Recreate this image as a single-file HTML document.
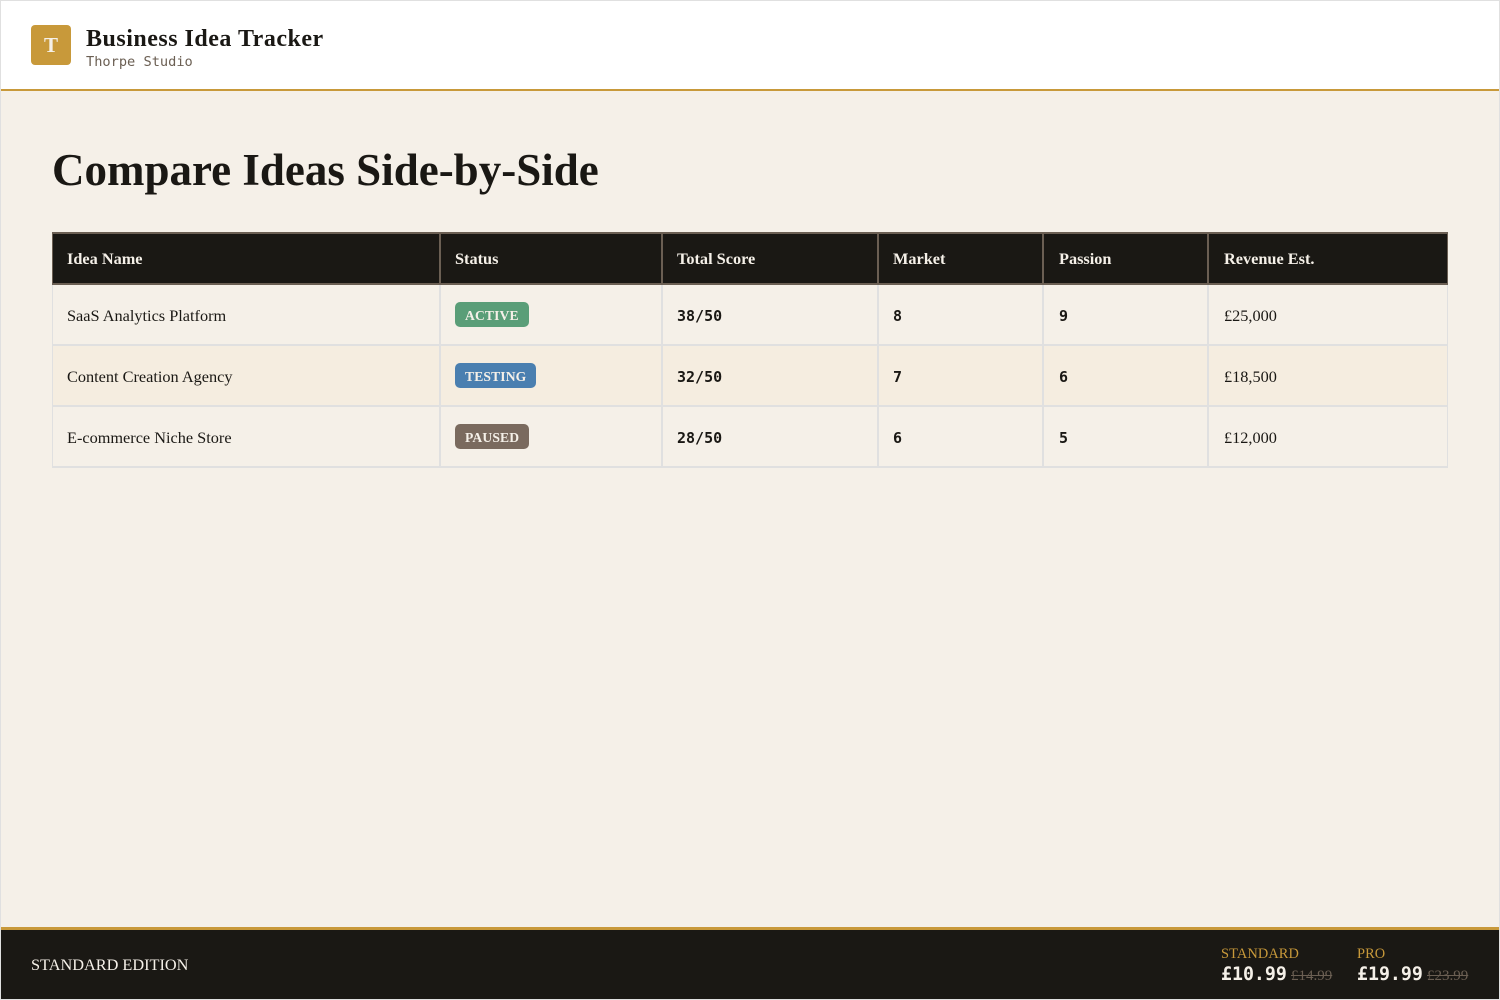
<!DOCTYPE html>
<html>
<head>
<meta charset="utf-8">
<style>
*{box-sizing:border-box}
html,body{margin:0;padding:0;width:1500px;height:1000px;overflow:hidden;background:#f5f0e8}
body{position:relative;font-family:"Liberation Serif",serif;color:#1a1814}
.frame{position:absolute;left:0;top:0;width:1500px;height:1000px;border:1px solid #e0e0e0;pointer-events:none;z-index:5}
header{position:absolute;left:0;top:0;width:1500px;height:91px;background:#fff;border-bottom:2px solid #c8993a}
.logo{position:absolute;left:31px;top:25px;width:40px;height:40px;background:#c8993a;border-radius:4px;color:#f5f0e8;font-weight:700;font-size:21px;line-height:40px;text-align:center}
.t1{position:absolute;left:86px;top:24px;font-size:24px;font-weight:700;line-height:30px;white-space:nowrap;letter-spacing:.5px}
.t2{position:absolute;left:86px;top:54px;font-family:"DejaVu Sans Mono",monospace;font-size:13.65px;line-height:17px;color:#6b5f53;white-space:nowrap}
h1{position:absolute;left:52px;top:144px;margin:0;font-size:45px;line-height:52px;font-weight:700;white-space:nowrap}
table{position:absolute;left:51px;top:232px;width:1396px;border-collapse:collapse;table-layout:fixed}
th{background:#1a1814;color:#f5f0e8;font-size:16.3px;font-weight:700;text-align:left;padding:1px 14px 0;height:51px;border:2px solid #6b5f53}
td{height:61px;padding:3px 14px 0;font-size:16.3px;border:2px solid #e0e0e0;vertical-align:middle}
th:nth-child(n+5),td:nth-child(n+5){padding-left:15px}
tr.alt td{background:#f5ede0}
.m{font-family:"DejaVu Sans Mono",monospace;font-weight:700;font-size:15px;padding-top:2px}
.b{display:inline-block;height:25px;line-height:28px;padding:0 10px;border-radius:5px;color:#f5f0e8;font-weight:700;font-size:13.6px;letter-spacing:.13px;vertical-align:middle;position:relative;top:-2px}
.strip{position:absolute;top:232px;width:1px;height:237px;background:#f5f0e8;z-index:3}
footer{position:absolute;left:0;top:927px;width:1500px;height:73px;background:#1a1814;border-top:3px solid #c8993a}
.ed{position:absolute;left:31px;top:955px;font-size:16.3px;line-height:20px;color:#f5f0e8;white-space:nowrap;z-index:2}
.lab{position:absolute;top:946px;font-size:14.4px;line-height:17px;color:#c8993a;letter-spacing:.1px;white-space:nowrap;z-index:2}
.pr{position:absolute;top:964px;font-family:"DejaVu Sans Mono",monospace;font-weight:700;font-size:18.24px;line-height:22px;color:#f5f0e8;white-space:nowrap;z-index:2}
.old{position:absolute;top:968px;font-size:15px;line-height:17px;color:#6b5f53;text-decoration:line-through;white-space:nowrap;z-index:2}
</style>
</head>
<body>
<header>
  <div class="logo">T</div>
  <div class="t1">Business Idea Tracker</div>
  <div class="t2">Thorpe Studio</div>
</header>
<h1>Compare Ideas Side-by-Side</h1>
<table>
  <colgroup><col style="width:388px"><col style="width:222px"><col style="width:216px"><col style="width:165px"><col style="width:165px"><col style="width:240px"></colgroup>
  <tr><th>Idea Name</th><th>Status</th><th>Total Score</th><th>Market</th><th>Passion</th><th>Revenue Est.</th></tr>
  <tr><td>SaaS Analytics Platform</td><td><span class="b" style="background:#5a9e78">ACTIVE</span></td><td class="m">38/50</td><td class="m">8</td><td class="m">9</td><td>£25,000</td></tr>
  <tr class="alt"><td>Content Creation Agency</td><td><span class="b" style="background:#4a7fb0">TESTING</span></td><td class="m">32/50</td><td class="m">7</td><td class="m">6</td><td>£18,500</td></tr>
  <tr><td>E-commerce Niche Store</td><td><span class="b" style="background:#7a6a5e">PAUSED</span></td><td class="m">28/50</td><td class="m">6</td><td class="m">5</td><td>£12,000</td></tr>
</table>
<div class="strip" style="left:51px"></div>
<div class="strip" style="left:1448px"></div>
<footer></footer>
<div class="ed">STANDARD EDITION</div>
<div class="lab" style="left:1221px">STANDARD</div>
<div class="pr" style="left:1221px">£10.99</div>
<div class="old" style="left:1291px">£14.99</div>
<div class="lab" style="left:1357px">PRO</div>
<div class="pr" style="left:1357px">£19.99</div>
<div class="old" style="left:1427px">£23.99</div>
<div class="frame"></div>
</body>
</html>
